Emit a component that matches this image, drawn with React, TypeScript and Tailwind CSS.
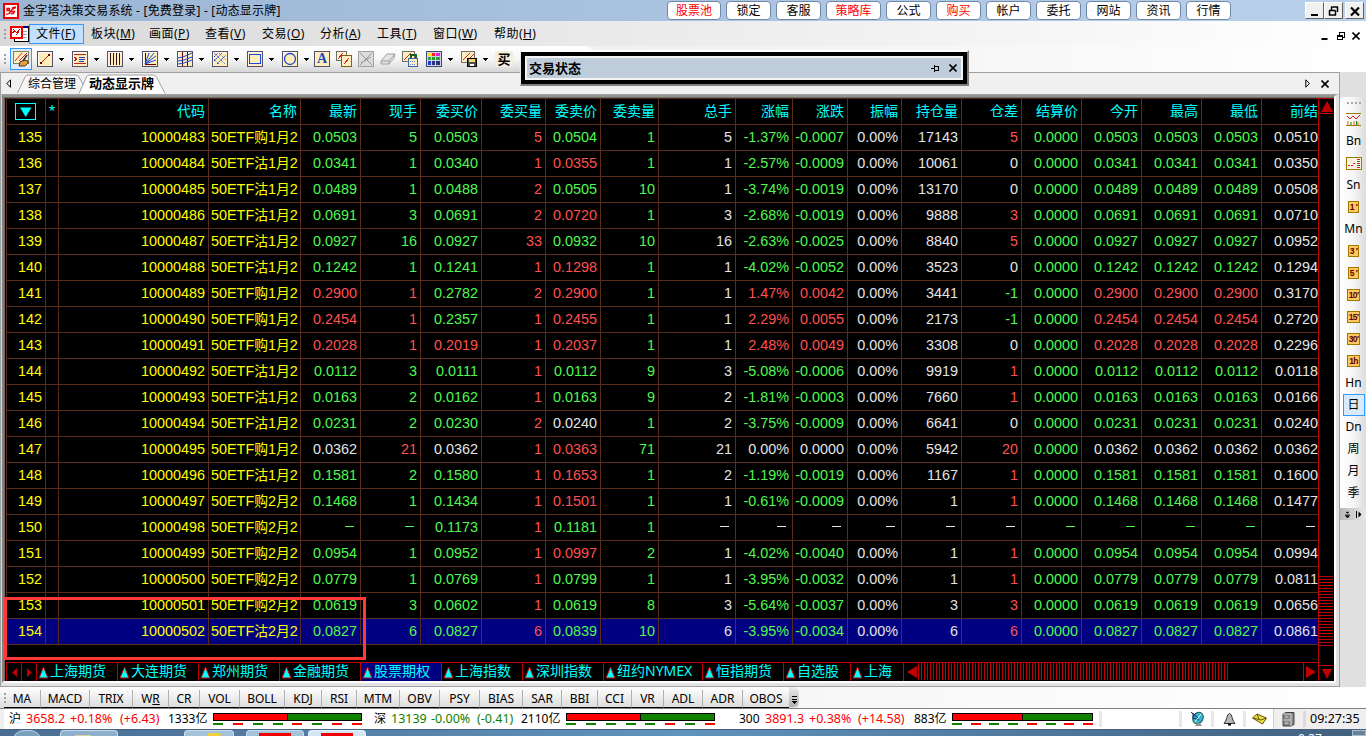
import type { ReactNode } from 'react'
import clsx from 'clsx'

/* ================= Data ================= */

const COLORS: Record<string, string> = {
  g: 'text-[#50f850]',
  r: 'text-[#ff5050]',
  w: 'text-[#e4e4e4]',
}

const COLUMNS = [
  '代码', '名称', '最新', '现手', '委买价', '委买量', '委卖价', '委卖量', '总手', '涨幅',
  '涨跌', '振幅', '持仓量', '仓差', '结算价', '今开', '最高', '最低', '前结',
]

const GRID =
  'grid grid-cols-[39px_13px_150px_92px_60px_60px_61px_64px_55px_58px_77px_57px_55px_54px_60px_60px_60px_60px_60px_60px_57px]'

// kind+month | last | vol | bid | bid vol | ask | ask vol | total | pct | change | oi | oi diff | prev settle
const QUOTES = [
  '购1|g0.0503|g5|g0.0503|r5|g0.0504|g1|5|g-1.37%|g-0.0007|17143|r5|0.0510',
  '沽1|g0.0341|g1|g0.0340|r1|r0.0355|g1|1|g-2.57%|g-0.0009|10061|w0|0.0350',
  '沽1|g0.0489|g1|g0.0488|r2|g0.0505|g10|1|g-3.74%|g-0.0019|13170|w0|0.0508',
  '沽1|g0.0691|g3|g0.0691|r2|r0.0720|g1|3|g-2.68%|g-0.0019|9888|r3|0.0710',
  '沽1|g0.0927|g16|g0.0927|r33|g0.0932|g10|16|g-2.63%|g-0.0025|8840|r5|0.0952',
  '沽1|g0.1242|g1|g0.1241|r1|r0.1298|g1|1|g-4.02%|g-0.0052|3523|w0|0.1294',
  '购1|r0.2900|r1|g0.2782|r2|r0.2900|g1|1|r1.47%|r0.0042|3441|g-1|0.3170',
  '购1|r0.2454|r1|g0.2357|r1|r0.2455|g1|1|r2.29%|r0.0055|2173|g-1|0.2720',
  '购1|r0.2028|r1|r0.2019|r1|r0.2037|g1|1|r2.48%|r0.0049|3308|w0|0.2296',
  '沽1|g0.0112|g3|g0.0111|r1|g0.0112|g9|3|g-5.08%|g-0.0006|9919|r1|0.0118',
  '沽1|g0.0163|g2|g0.0162|r1|g0.0163|g9|2|g-1.81%|g-0.0003|7660|r1|0.0166',
  '沽1|g0.0231|g2|g0.0230|r2|w0.0240|g1|2|g-3.75%|g-0.0009|6641|w0|0.0240',
  '购1|w0.0362|r21|w0.0362|r1|r0.0363|g71|21|w0.00%|w0.0000|5942|r20|0.0362',
  '沽1|g0.1581|g2|g0.1580|r1|r0.1653|g1|2|g-1.19%|g-0.0019|1167|r1|0.1600',
  '购2|g0.1468|g1|g0.1434|r1|r0.1501|g1|1|g-0.61%|g-0.0009|1|r1|0.1477',
  '购2|g–|g–|g0.1173|r1|g0.1181|g1|–|w–|w–|–|w–|–',
  '购2|g0.0954|g1|g0.0952|r1|r0.0997|g2|1|g-4.02%|g-0.0040|1|r1|0.0994',
  '购2|g0.0779|g1|g0.0769|r1|g0.0799|g1|1|g-3.95%|g-0.0032|1|r1|0.0811',
  '购2|g0.0619|g3|g0.0602|r1|g0.0619|g8|3|g-5.64%|g-0.0037|3|r3|0.0656',
  '沽2|g0.0827|g6|g0.0827|r6|g0.0839|g10|6|g-3.95%|g-0.0034|6|r6|0.0861',
]

function toCells(line: string) {
  const [, last, vol, bid, bidVol, ask, askVol, total, pct, chg, oi, oiDiff, prev] = line.split('|')
  const none = total === '–'
  return [
    last, vol, bid, bidVol, ask, askVol, 'w' + total, pct, chg,
    none ? 'w–' : 'w0.00%', 'w' + oi, oiDiff,
    none ? 'g–' : 'g0.0000', last, last, last, 'w' + prev,
  ]
}

const TITLE_BUTTONS = [
  { t: '股票池', c: 'w-[54px] text-[#ff0000]' },
  { t: '锁定', c: 'ml-[5px] w-[45px]' },
  { t: '客服', c: 'ml-[5px] w-[45px]' },
  { t: '策略库', c: 'ml-[5px] w-[55px] text-[#ff0000]' },
  { t: '公式', c: 'ml-[5px] w-[45px]' },
  { t: '购买', c: 'ml-[5px] w-[45px] text-[#ff0000]' },
  { t: '帐户', c: 'ml-[5px] w-[45px]' },
  { t: '委托', c: 'ml-[5px] w-[45px]' },
  { t: '网站', c: 'ml-[5px] w-[45px]' },
  { t: '资讯', c: 'ml-[5px] w-[45px]' },
  { t: '行情', c: 'ml-[5px] w-[45px]' },
]

const MENUS = [
  { t: '板块', k: 'M', w: 'w-[58px]' },
  { t: '画面', k: 'P', w: 'w-[56px]' },
  { t: '查看', k: 'V', w: 'w-[57px]' },
  { t: '交易', k: 'O', w: 'w-[58px]' },
  { t: '分析', k: 'A', w: 'w-[57px]' },
  { t: '工具', k: 'T', w: 'w-[56px]' },
  { t: '窗口', k: 'W', w: 'w-[61px]' },
  { t: '帮助', k: 'H', w: 'w-[58px]' },
]

const MARKET_TABS = [
  { t: '上海期货', w: 'w-[81px]' },
  { t: '大连期货', w: 'w-[81px]' },
  { t: '郑州期货', w: 'w-[81px]' },
  { t: '金融期货', w: 'w-[81px]' },
  { t: '股票期权', w: 'w-[81px]', on: true },
  { t: '上海指数', w: 'w-[81px]' },
  { t: '深圳指数', w: 'w-[81px]' },
  { t: '纽约NYMEX', w: 'w-[99px]' },
  { t: '恒指期货', w: 'w-[81px]' },
  { t: '自选股', w: 'w-[67px]' },
  { t: '上海', w: 'w-[53px]' },
]

const INDICATORS = [
  { t: 'MA', w: 'w-[36px]' },
  { t: 'MACD', w: 'w-[49px]' },
  { t: 'TRIX', w: 'w-[43px]' },
  { t: 'WR', w: 'w-[36px]' },
  { t: 'CR', w: 'w-[31px]' },
  { t: 'VOL', w: 'w-[40px]' },
  { t: 'BOLL', w: 'w-[45px]' },
  { t: 'KDJ', w: 'w-[37px]' },
  { t: 'RSI', w: 'w-[35px]' },
  { t: 'MTM', w: 'w-[43px]' },
  { t: 'OBV', w: 'w-[40px]' },
  { t: 'PSY', w: 'w-[40px]' },
  { t: 'BIAS', w: 'w-[43px]' },
  { t: 'SAR', w: 'w-[39px]' },
  { t: 'BBI', w: 'w-[36px]' },
  { t: 'CCI', w: 'w-[34px]' },
  { t: 'VR', w: 'w-[32px]' },
  { t: 'ADL', w: 'w-[39px]' },
  { t: 'ADR', w: 'w-[40px]' },
  { t: 'OBOS', w: 'w-[47px]' },
]

/* ================= Small pieces ================= */

function Logo({ className }: { className: string }) {
  return (
    <svg viewBox="0 0 16 16" className={className}>
      <rect width="16" height="16" fill="#f00000" />
      <rect x="2" y="2" width="12" height="12" fill="#fff" />
      <path d="M4 5.500h2.500v2H4zM3 11.500l3-1 3-4 4-2M8.500 8.500h3l-1 2h-3M9 5l4-1" stroke="#e00000" strokeWidth="1.300" fill="none" />
    </svg>
  )
}

function Tile({ children }: { children: ReactNode }) {
  return (
    <svg viewBox="0 0 16 16" shapeRendering="crispEdges" className="h-4 w-4 shrink-0">
      <rect x="0.5" y="0.5" width="15" height="15" fill="#ffeebc" stroke="#50506c" />
      <path d="M1.5 14.5v-13h13" stroke="#fffbe8" fill="none" />
      {children}
    </svg>
  )
}

function Caret() {
  return (
    <svg viewBox="0 0 5 3" className="ml-[6px] mr-2 h-[3px] w-[5px] shrink-0" shapeRendering="crispEdges">
      <path d="M0 0h5L2.5 3z" fill="#000" />
    </svg>
  )
}

function Cross({ className }: { className: string }) {
  return (
    <svg viewBox="0 0 8 8" className={className}>
      <path d="M0.5 0.5l7 7M7.5 0.5l-7 7" stroke="#000" strokeWidth="1.6" />
    </svg>
  )
}

function Grip({ className }: { className?: string }) {
  return (
    <div className={clsx('flex flex-col gap-[2px]', className)}>
      {[0, 1, 2].map(i => (
        <i key={i} className="h-[2px] w-[2px] bg-[#a0a0a0]" />
      ))}
    </div>
  )
}

/* ================= Title + menu ================= */

function TitleBar() {
  return (
    <header className="flex h-[21px] shrink-0 items-center bg-linear-to-r from-[#9bb5d5] to-[#b9d1ea]">
      <Logo className="ml-[3px] h-4 w-4 shrink-0" />
      <span className="ml-1 w-[644px] whitespace-pre text-[12px] leading-[20px] tracking-[0.2px]">
        金字塔决策交易系统 - [免费登录] - [动态显示牌]
      </span>
      {TITLE_BUTTONS.map(b => (
        <button
          key={b.t}
          className={clsx('h-[19px] shrink-0 rounded-[4px] border border-[#7088a8] bg-white text-center text-[12px] leading-[17px]', b.c)}
        >
          {b.t}
        </button>
      ))}
      <div className="ml-auto mr-[2px] flex">
        <WinButton>
          <path d="M5 12h7" strokeWidth="2" />
        </WinButton>
        <WinButton>
          <path d="M6 4h7M6.5 4v3M12.5 4v5M4 7.5h6.5M4.5 7.5v5M10.5 7.5v5M4 12h7" strokeWidth="1.5" />
        </WinButton>
        <WinButton className="ml-[2px]">
          <path d="M5 4.5l8 8M13 4.5l-8 8" strokeWidth="2.2" />
        </WinButton>
      </div>
    </header>
  )
}

function WinButton({ children, className }: { children: ReactNode; className?: string }) {
  return (
    <span className={clsx('h-[17px] w-[19px] border border-b-[#606060] border-l-white border-r-[#606060] border-t-white bg-[#f0f0f0]', className)}>
      <svg viewBox="0 0 17 15" className="h-[15px] w-[17px]" fill="none" stroke="#000">
        {children}
      </svg>
    </span>
  )
}

function MenuBar() {
  return (
    <nav className="flex h-[25px] shrink-0 items-center bg-linear-to-r from-[#d9d9d9] via-[#ececec] to-[#ffffff] text-[12px]">
      <Grip className="ml-1" />
      <div className="ml-[4px] flex h-5 w-[19px] items-center">
        <svg viewBox="0 0 19 17" className="h-[17px] w-[19px]" shapeRendering="crispEdges">
          <rect x="4.5" y="1" width="14" height="15" fill="#fff" stroke="#000" />
          <rect x="5" y="1" width="13" height="2" fill="#000080" />
          <path d="M13 6h4M13 9h4M13 12h4" stroke="#a0a0a0" />
          <rect x="0.5" y="1.5" width="11" height="11" fill="#fff" stroke="#f00000" strokeWidth="2" />
          <path d="M2 8l3-2 2 2 3-4M3 4l2 2M6 10l3-3" stroke="#e00000" fill="none" />
        </svg>
      </div>
      <span className="flex h-5 w-[55px] items-center whitespace-nowrap border border-[#3399ff] bg-[#c2e0ff] pl-[6px] tracking-[0.45px]">
        文件(<u>F</u>)
      </span>
      <span className="w-[7px]" />
      {MENUS.map(m => (
        <span key={m.k} className={clsx('shrink-0 whitespace-nowrap tracking-[0.45px]', m.w)}>
          {m.t}(<u>{m.k}</u>)
        </span>
      ))}
      <div className="ml-auto mr-[6px] mt-[5px] flex items-center">
        <svg viewBox="0 0 7 10" className="h-[10px] w-[7px]">
          <path d="M0.5 8h6" stroke="#000" strokeWidth="2" />
        </svg>
        <svg viewBox="0 0 8 10" className="ml-[9px] h-[10px] w-2" shapeRendering="crispEdges" fill="none" stroke="#000">
          <path d="M2.5 4V1.5h5v5H6M2 1.5h6" />
          <path d="M0.5 4.5h5v4h-5zM0 4.5h6M0 5h6" />
        </svg>
        <Cross className="ml-[7px] h-2 w-2" />
      </div>
    </nav>
  )
}

/* ================= Drawing toolbar ================= */

function Toolbar() {
  return (
    <div className="flex h-[26px] shrink-0 bg-linear-to-r from-[#e4e4e4] to-[#ffffff]">
      <div className="flex w-[592px] items-center rounded-r-md bg-linear-to-b from-[#ffffff] via-[#f6f6f6] to-[#d6d6d6]">
        <Grip className="ml-1" />
        <span className="ml-[4px] mr-[5px] flex h-[22px] w-[22px] shrink-0 items-center justify-center border border-[#3399ff] bg-[#dcecfb]">
          <svg viewBox="0 0 16 16" className="h-4 w-4">
            <rect x="0.5" y="0.5" width="15" height="12" fill="#fff0c4" stroke="#808060" />
            <path d="M2 10L9 2M6 10l8-8" stroke="#e02020" />
            <path d="M6 15l1-4 4-2 4 1v2l-3 3z" fill="#e0a050" stroke="#603010" />
            <path d="M10 10l4-6" stroke="#203060" strokeWidth="1.5" />
          </svg>
        </span>
        <Tile>
          <path d="M4 12l8-8" stroke="#c02020" />
          <path d="M3 11h2v2H3zM11 3h2v2h-2z" fill="#600" />
        </Tile>
        <Caret />
        <Tile>
          <path d="M2 3.5h12M2 12.5h12" stroke="#c02020" />
          <path d="M7 6.5h6M7 8.5h6M7 10.5h5" stroke="#2040c0" />
          <path d="M2 6l3 2-3 2" stroke="#c02020" fill="none" />
        </Tile>
        <Caret />
        <Tile>
          <path d="M3.5 2v12M6.5 2v12M9.5 2v12M12.5 2v12" stroke="#301010" />
        </Tile>
        <Caret />
        <Tile>
          <path d="M3 13V2M3 13h11" stroke="#600" />
          <path d="M3 13L7 2M3 13L12 2M3 13l11-8M3 13l11-4" stroke="#1848e0" shapeRendering="auto" />
        </Tile>
        <Caret />
        <Tile>
          <path d="M5.5 1v14M10.5 1v14" stroke="#600" />
          <path d="M1 7l5-1 9-4M1 10l6-1 8-3M1 13l6-1 8-3" stroke="#1848e0" fill="none" shapeRendering="auto" />
        </Tile>
        <Caret />
        <Tile>
          <path d="M2 6l4-4M2 10l8-8M5 13l9-9" stroke="#1848e0" strokeDasharray="2 1" shapeRendering="auto" />
          <path d="M2 2l11 11M7 2l7 7M2 8l5 5" stroke="#1848e0" strokeDasharray="1 1" shapeRendering="auto" />
        </Tile>
        <Caret />
        <Tile>
          <rect x="2.5" y="3.5" width="11" height="9" fill="none" stroke="#1848e0" />
        </Tile>
        <Caret />
        <Tile>
          <circle cx="8" cy="8" r="5.5" fill="none" stroke="#1848e0" strokeWidth="1.3" shapeRendering="auto" />
        </Tile>
        <Caret />
        <span className="-ml-[3px] mr-[6px] flex h-4 w-4 shrink-0 items-center justify-center border border-[#50506c] bg-[#ffeebc] font-['Liberation_Serif',serif] text-[14px] font-bold leading-none text-[#1848c0]">
          A
        </span>
        <svg viewBox="0 0 16 16" className="mr-[6px] h-4 w-4 shrink-0" shapeRendering="crispEdges">
          <rect x="0.5" y="0.5" width="10" height="9" fill="#fff4d4" stroke="#707060" />
          <rect x="5.5" y="4.5" width="10" height="11" fill="#fff0c4" stroke="#806010" />
          <path d="M2 8l5-6M8 13l5-6" stroke="#e02020" />
        </svg>
        <svg viewBox="0 0 16 16" className="mr-[6px] h-4 w-4 shrink-0">
          <rect x="0.5" y="0.5" width="15" height="15" fill="#dcdcdc" stroke="#a0a0a0" />
          <path d="M2 2l12 12M14 2L2 14M3 12L13 6" stroke="#989898" />
        </svg>
        <svg viewBox="0 0 16 16" className="mr-[6px] h-4 w-4 shrink-0">
          <path d="M1 10l6-7h8l-1 4-5 6H1z" fill="#e4e4e4" stroke="#a0a0a0" />
          <path d="M1 10h8l6-7M9 10v3" stroke="#a0a0a0" fill="none" />
        </svg>
        <svg viewBox="0 0 16 16" className="mr-[8px] h-4 w-4 shrink-0" shapeRendering="crispEdges">
          <rect x="0.5" y="0.5" width="12" height="10" fill="#fff0c4" stroke="#707060" />
          <path d="M2 9l7-7" stroke="#e02020" />
          <path d="M8.500 8V3.500h5V8" stroke="#106020" strokeWidth="2" fill="none" />
          <rect x="6.500" y="7.500" width="9" height="8" fill="#fff4c0" stroke="#4060a0" />
          <path d="M8 10h6M8 13h6" stroke="#6080e0" strokeDasharray="1 1" />
        </svg>
        <svg viewBox="0 0 16 16" className="h-4 w-4 shrink-0" shapeRendering="crispEdges">
          <rect x="0.5" y="0.5" width="15" height="15" fill="#d0d4e8" stroke="#404878" />
          <path d="M2 2h3v3H2z" fill="#ffe020" />
          <path d="M6 2h3v3H6z" fill="#ff2020" />
          <path d="M10 2h4v3h-4z" fill="#e020e0" />
          <path d="M2 6h3v3H2zM10 6h4v3h-4z" fill="#30a040" />
          <path d="M6 6h3v3H6z" fill="#20a020" />
          <path d="M2 10h3v4H2z" fill="#2040d0" />
          <path d="M6 10h3v4H6zM10 10h4v4h-4z" fill="#303080" />
        </svg>
        <Caret />
        <svg viewBox="0 0 16 16" className="h-4 w-4 shrink-0" shapeRendering="crispEdges">
          <rect x="0.5" y="0.5" width="13" height="11" fill="#fff0c4" stroke="#707060" />
          <path d="M2 9l7-7M6 10l7-7" stroke="#e02020" />
          <rect x="6.500" y="7.500" width="9" height="8" fill="#505050" stroke="#000" />
          <path d="M8 8h6v3H8z" fill="#ffd860" />
          <path d="M9 13h4v2H9z" fill="#fff" />
        </svg>
        <Caret />
        <span className="-ml-px flex h-4 w-[18px] items-center justify-center bg-[#f3eee0] text-[13px] font-bold leading-none">买</span>
      </div>
    </div>
  )
}

/* ================= Document tabs ================= */

function DocTabs() {
  return (
    <div className="flex h-[21px] shrink-0 items-center bg-[#f0f0f0] text-[12px]">
      <svg viewBox="0 0 5 9" className="ml-[5px] h-[9px] w-[5px]">
        <path d="M4.500 0.800v7.400L0.800 4.500z" fill="none" stroke="#000" />
      </svg>
      <div className="relative ml-[6px] h-[21px] w-[150px]">
        <svg viewBox="0 0 150 21" className="absolute inset-0 h-[21px] w-[150px]">
          <path d="M0.500 20L8 4q1-2 3-2h48q2 0 3 2l5 9" fill="#f6f6f6" stroke="#a0a0a0" />
          <path d="M62 20.500L69.500 4q1-2 3-2h64q2 0 3 2L148 20.500" fill="#fff" stroke="#a0a0a0" />
        </svg>
        <div className="relative flex h-full items-center leading-none">
          <span className="w-[61px] whitespace-nowrap pl-[11px]">综合管理</span>
          <span className="whitespace-nowrap pl-[11px] text-[13px] font-bold">动态显示牌</span>
        </div>
      </div>
      <svg viewBox="0 0 5 9" className="ml-auto h-[9px] w-[5px]">
        <path d="M0.800 0.800v7.400L4.500 4.500z" fill="none" stroke="#000" />
      </svg>
      <Cross className="ml-[11px] mr-[10px] h-2 w-2" />
    </div>
  )
}

/* ================= Quote board ================= */

function QuoteHeader() {
  return (
    <div className={clsx(GRID, 'h-[26px] border-t border-[#5c2c1a] text-[14px] leading-[23px] text-[#00ffff]')}>
      <div className="flex items-start border-l border-[#5c2c1a] pl-[8px] pt-[4px]">
        <svg viewBox="0 0 21 17" className="h-[17px] w-[21px]">
          <rect x="0.500" y="0.500" width="20" height="16" fill="none" stroke="#00ffff" />
          <path d="M5 4.500h11.500L10.700 14z" fill="#00ffff" />
        </svg>
      </div>
      <div className="border-l border-[#5c2c1a] text-center text-[12px] leading-[23px]">*</div>
      {COLUMNS.map((c, i) => (
        <div
          key={c}
          className={clsx(
            'overflow-hidden whitespace-nowrap border-l border-[#5c2c1a] text-right',
            i === COLUMNS.length - 1 ? 'pr-0' : 'pr-[3px]',
          )}
        >
          {c}
        </div>
      ))}
    </div>
  )
}

function QuoteRow({ line, index }: { line: string; index: number }) {
  const kind = line.split('|')[0]
  const active = index === QUOTES.length - 1
  const cells = toCells(line)
  return (
    <div
      className={clsx(
        GRID,
        "h-[26px] border-t border-[#5c2c1a] font-['Liberation_Sans','Noto_Sans_CJK_SC',sans-serif] text-[14.4px] leading-[25px]",
        active && 'bg-[#000080]',
      )}
    >
      <div className="border-l border-[#5c2c1a] pr-[3px] text-right text-[#ffff00]">{135 + index}</div>
      <div className="border-l border-[#5c2c1a]" />
      <div className="border-l border-[#5c2c1a] pr-[3px] text-right text-[#ffff00]">{10000483 + index}</div>
      <div className="overflow-hidden whitespace-nowrap border-l border-[#5c2c1a] pl-[2px] text-[#ffff00]">
        50ETF<span className="text-[13.8px]">{kind[0]}</span>{kind[1]}<span className="text-[13.8px]">月</span>2
      </div>
      {cells.map((c, i) => (
        <div
          key={i}
          className={clsx(
            'whitespace-nowrap border-l border-[#5c2c1a] text-right',
            i === cells.length - 1 ? 'pr-0' : 'pr-[3px]',
            COLORS[c[0]],
          )}
        >
          {c.slice(1) === '–' ? <i className="mb-[5px] mr-[3px] inline-block h-px w-[9px] bg-current" /> : c.slice(1)}
        </div>
      ))}
    </div>
  )
}

function MarketTabs() {
  return (
    <div className="flex h-[19px] shrink-0 border-t border-[#c00000] text-[14px] leading-[16px] text-[#00ffff]">
      <div className="flex w-[15px] items-center justify-center border-l border-[#c00000]">
        <svg viewBox="0 0 5 9" className="h-[9px] w-[5px]"><path d="M5 0v9L0 4.500z" fill="#c00000" /></svg>
      </div>
      <div className="flex w-[15px] items-center justify-center border-l border-[#c00000]">
        <svg viewBox="0 0 5 9" className="h-[9px] w-[5px]"><path d="M0 0v9L5 4.500z" fill="#c00000" /></svg>
      </div>
      {MARKET_TABS.map(m => (
        <div
          key={m.t}
          className={clsx('flex shrink-0 items-start whitespace-nowrap border-l border-[#c00000] pl-px', m.w, m.on && 'bg-[#000080]')}
        >
          <svg viewBox="0 0 11 13" className="mr-px mt-[3px] h-[13px] w-[11px] shrink-0">
            <path d="M5.500 1L10 12H1z" fill="#00ffff" stroke="#c00000" />
          </svg>
          {m.t}
        </div>
      ))}
      <div className="flex w-[14px] shrink-0 items-center justify-end border-l border-[#c00000]">
        <svg viewBox="0 0 10 12" className="h-3 w-[10px]"><path d="M10 0v12L0 6z" fill="#c00000" /></svg>
      </div>
      <div className="ml-px h-[17px] w-[310px] shrink-0 bg-[repeating-linear-gradient(90deg,#c00000_0_1px,#000_1px_3px)]" />
      <div className="ml-auto flex w-[15px] shrink-0 items-center border-l border-[#c00000] pl-[2px]">
        <svg viewBox="0 0 10 12" className="h-3 w-[10px]"><path d="M0 0v12L10 6z" fill="#c00000" /></svg>
      </div>
    </div>
  )
}

function VScroll() {
  return (
    <div className="flex flex-1 flex-col border-l border-t border-[#c00000]">
      <div className="flex h-[15px] items-center justify-center border-b border-[#c00000]">
        <svg viewBox="0 0 12 11" className="h-[11px] w-3"><path d="M6 0l6 11H0z" fill="#c00000" /></svg>
      </div>
      <div className="mt-[462px] h-[70px] w-[14px] bg-[repeating-linear-gradient(180deg,#c00000_0_1px,#000_1px_3px)]" />
      <div className="mt-auto flex h-4 items-center justify-center border-t border-[#c00000]">
        <svg viewBox="0 0 10 10" className="h-[10px] w-[10px]"><path d="M0 0h10L5 10z" fill="#c00000" /></svg>
      </div>
    </div>
  )
}

function Board() {
  return (
    <div className="flex w-[1340px] shrink-0 flex-col border border-[#a0a0a0] bg-[#f0f0f0]">
      <DocTabs />
      <div className="flex flex-1 border-b-3 border-l border-r-3 border-t border-b-[#e3e3e3] border-l-[#d8d8d8] border-r-[#e3e3e3] border-t-[#a0a0a0]">
        <div className="flex flex-1 border-2 border-b-white border-l-[#808080] border-r-white border-t-[#909890]">
          <div className="flex flex-1 border-l border-t border-[#696969] bg-black">
            <div className="flex w-[1313px] shrink-0 flex-col pl-px">
              <QuoteHeader />
              {QUOTES.map((q, i) => (
                <QuoteRow key={i} line={q} index={i} />
              ))}
              <div className="h-[18px] border-t border-[#5c2c1a]" />
              <MarketTabs />
            </div>
            <VScroll />
          </div>
        </div>
      </div>
    </div>
  )
}

/* ================= Period toolbar ================= */

function Period({ children }: { children: ReactNode }) {
  return (
    <span className="flex h-3 items-center whitespace-nowrap border border-[#a07800] bg-[#ffc860] px-px font-['Liberation_Sans',sans-serif] text-[8.5px] font-bold leading-none tracking-[-0.6px] text-[#600000]">
      {children}
    </span>
  )
}

function PeriodBar() {
  const items: ReactNode[] = [
    <svg viewBox="0 0 15 13" className="h-[13px] w-[15px]">
      <path d="M0 0.500h15M0 12.500h15" stroke="#a07800" />
      <path d="M1 3l3 3 3-3 3 3 4-4" stroke="#e02020" fill="none" />
      <path d="M2 12V8M8 12V8M12 12V9" stroke="#e07000" />
      <path d="M5 12V9M10.500 12V8" stroke="#108020" />
    </svg>,
    'Bn',
    <svg viewBox="0 0 16 13" className="h-[13px] w-4" shapeRendering="crispEdges">
      <rect x="0.500" y="0.500" width="15" height="12" fill="#fff4e4" stroke="#a07800" />
      <path d="M2 8.500h5M7 6.500h3" stroke="#e02020" strokeDasharray="2 1" />
      <path d="M11 2.500h3M11 6.500h3M11 10.500h3" stroke="#e02020" />
      <path d="M11 4.500h3M11 8.500h3" stroke="#108020" />
    </svg>,
    'Sn', <Period>1 ′</Period>, 'Mn', <Period>3 ′</Period>, <Period>5 ′</Period>, <Period>10′</Period>,
    <Period>15′</Period>, <Period>30′</Period>, <Period>1h</Period>, 'Hn', '日', 'Dn', '周', '月', '季',
  ]
  return (
    <aside className="flex flex-1 flex-col bg-[#e0e0e0] pt-[25px]">
      <div className="flex flex-col items-center rounded-t bg-linear-to-r from-[#ffffff] via-[#f6f6f6] to-[#dcdcdc] pl-px">
        <div className="flex h-[11px] w-full items-center justify-center gap-[2px]">
          {[0, 1, 2, 3].map(i => (
            <i key={i} className="h-[2px] w-[2px] bg-[#a8a8a8]" />
          ))}
        </div>
        {items.map((it, i) => (
          <div
            key={i}
            className={clsx(
              'flex h-[22px] w-[22px] items-center justify-center text-[12px] leading-none',
              it === '日' && 'border border-[#3399ff] bg-[#d8ebfd]',
            )}
          >
            {it}
          </div>
        ))}
        <div className="h-[4px]" />
      </div>
      <div className="flex h-[12px] items-center justify-center gap-[6px] bg-linear-to-r from-[#b8b8b8] to-[#e8e8e8]">
        <svg viewBox="0 0 5 7" className="h-[7px] w-[5px]"><path d="M0 3.500h5M0 4.500h5L2.500 7zM1 1l1.500 1.500L4 1z" stroke="#000" strokeWidth="0.400" /></svg>
        <svg viewBox="0 0 6 7" className="h-[7px] w-[6px]"><path d="M0.500 0v7" stroke="#000" /><path d="M2.500 0.500v6l3-3z" /></svg>
      </div>
    </aside>
  )
}

/* ================= Bottom bars ================= */

function IndicatorBar() {
  return (
    <div className="flex h-[21px] shrink-0 bg-linear-to-r from-[#ececec] to-[#ffffff] text-[12px]">
      <div className="flex rounded-r bg-linear-to-b from-[#ffffff] to-[#dcdcdc]">
        <Grip className="ml-1 mt-[6px]" />
        {INDICATORS.map((it, i) => (
          <div
            key={it.t}
            className={clsx(
              'mt-[3px] flex h-[18px] shrink-0 items-center justify-center border-b border-black leading-none',
              i === 0 ? 'ml-[-2px]' : 'border-l border-l-[#b0b0b0]',
              it.w,
            )}
          >
            {it.t === 'WR' ? <span>W<u>R</u></span> : it.t}
          </div>
        ))}
        <div className="flex h-[20px] w-[10px] items-end justify-center rounded-r-md bg-linear-to-b from-[#ececec] to-[#b0b0b0] pb-[3px]">
          <svg viewBox="0 0 5 8" className="h-2 w-[5px]" shapeRendering="crispEdges">
            <path d="M0 0.500h5M0 3.500h5" stroke="#000" />
            <path d="M0 5h5L2.500 8z" />
          </svg>
        </div>
      </div>
    </div>
  )
}

// two-tone bar with the up/down ticks under it
function Meter({ ticks, className }: { ticks: string; className: string }) {
  return (
    <div className={clsx('shrink-0', className)}>
      <div className="flex h-2 border border-black">
        <div className="flex-1 border-r border-black bg-[#ff0000]" />
        <div className="flex-1 bg-[#108000]" />
      </div>
      <div className="mt-[2px] flex justify-between">
        {ticks.split('').map((t, i) => (
          <i key={i} className={clsx('h-[2px] w-[10px]', t === 'r' ? 'bg-[#ff0000]' : 'bg-[#108000]')} />
        ))}
      </div>
    </div>
  )
}

function StatusBar() {
  return (
    <footer className="flex h-[21px] shrink-0 items-center whitespace-nowrap border-t border-[#808080] bg-white text-[12.5px] leading-none">
      <span className="h-full w-1 bg-[#f0eeee]" />
      <span className="ml-[5px] w-[17px] text-[12px]">沪</span>
      <span className="w-[44px] text-[#ff0000]">3658.2</span>
      <span className="w-[50px] text-[#ff0000]">+0.18%</span>
      <span className="w-[48px] text-[#ff0000]">(+6.43)</span>
      <span className="w-[45px] text-[12px]">1333亿</span>
      <Meter ticks="grggrgrr" className="w-[149px]" />
      <span className="ml-[12px] w-[17px] text-[12px]">深</span>
      <span className="w-[40px] text-[#108000]">13139</span>
      <span className="w-[46px] text-[#108000]">-0.00%</span>
      <span className="w-[44px] text-[#108000]">(-0.41)</span>
      <span className="w-[45px] text-[12px]">2110亿</span>
      <Meter ticks="gggggrgr" className="w-[149px]" />
      <span className="ml-6 w-[26px] text-[12px]">300</span>
      <span className="w-[44px] text-[#ff0000]">3891.3</span>
      <span className="w-[49px] text-[#ff0000]">+0.38%</span>
      <span className="w-[56px] text-[#ff0000]">(+14.58)</span>
      <span className="w-[38px] text-[12px]">883亿</span>
      <Meter ticks="grggrgrr" className="w-[141px]" />
      <span className="ml-[6px] h-4 w-[3px] bg-[#e8e6e6]" />
      <div className="ml-auto flex h-full items-center">
        <span className="h-4 w-[3px] bg-[#e8e6e6]" />
        <svg viewBox="0 0 15 16" className="ml-[8px] h-4 w-[15px]">
          <ellipse cx="8" cy="7" rx="5" ry="6" transform="rotate(35 8 7)" fill="#30b8c8" stroke="#305060" />
          <path d="M1 1l7 6M3 2v5l6 2" stroke="#102060" fill="none" />
          <path d="M7 12l-2 3h7l-2-3" fill="#909090" />
          <path d="M11 3l-6 8" stroke="#e0ffff" />
        </svg>
        <span className="ml-[6px] h-4 w-[3px] bg-[#e8e6e6]" />
        <svg viewBox="0 0 13 13" className="ml-[9px] h-[13px] w-[13px]">
          <path d="M6.500 0.500c-3 1-2 6-5.500 10h11c-3.500-4-2.500-9-5.500-10z" fill="#b8b8b8" stroke="#303030" />
          <path d="M5 11.500h3" stroke="#000" strokeWidth="2" />
        </svg>
        <span className="ml-[7px] h-4 w-[3px] bg-[#e8e6e6]" />
        <svg viewBox="0 0 15 12" className="ml-[6px] h-3 w-[15px]">
          <path d="M0.500 5L5 1l9.500 4-4 6z" fill="#f0e040" stroke="#605010" />
          <path d="M1 5l8 2 5-2M5 1l2 5" stroke="#605010" fill="none" />
        </svg>
        <div className="ml-[6px] flex h-full items-center border-l border-[#d0d0d0] bg-[#f0eeee]">
          <svg viewBox="0 0 13 15" className="ml-2 h-[15px] w-[13px]">
            <path d="M1 2l3-1.500h8v12L9 14H1z" fill="#888" stroke="#404040" />
            <path d="M1 2h8v12M1 8h8M3 5h3M3 11h3" stroke="#d0d0d0" fill="none" />
          </svg>
          <span className="ml-[8px] h-4 w-[3px] bg-[#dcdada]" />
          <span className="w-[60px] pl-1">09:27:35</span>
        </div>
      </div>
    </footer>
  )
}

function TaskBar() {
  return (
    <div className="flex h-[7px] shrink-0 overflow-hidden border-t border-[#486080] bg-linear-to-r from-[#4a6d93] via-[#5f93bd] to-[#41607f]">
      <div className="ml-[12px] h-6 w-[30px] shrink-0 rounded-full border border-[#b8d4e8] bg-[#7ba0bc]" />
      <div className="ml-[18px] w-[58px] shrink-0 rounded-t border border-b-0 border-[#c8dcec] bg-[#8fb0cc]">
        <div className="ml-[14px] mt-[4px] h-[2px] w-[16px] bg-[#d8d0a0]" />
      </div>
      <div className="ml-[66px] w-[50px] shrink-0 rounded-t border border-b-0 border-[#c8dcec] bg-[#a4c2da]">
        <div className="ml-[22px] mt-[2px] h-[6px] w-[14px] rounded-full bg-[#f0d040]" />
      </div>
      <div className="ml-[12px] w-[58px] shrink-0 rounded-t border border-b-0 border-[#c8dcec] bg-[#a4c2da]">
        <div className="ml-[12px] mt-[2px] h-2 w-8 border-[3px] border-[#f00000] bg-white" />
      </div>
      <div className="ml-[4px] w-[58px] shrink-0 rounded-t border border-b-0 border-[#e8f4fc] bg-[#d4e6f4]">
        <div className="ml-[12px] mt-[2px] h-2 w-8 border-[3px] border-[#f00000] bg-white" />
      </div>
      <div className="ml-auto mr-[28px] mt-[3px] h-[11px] w-[26px] whitespace-nowrap text-[12px] leading-[11px] text-white">9:27</div>
      <div className="w-[14px] shrink-0 border border-[#a8bccc] bg-[#6a8299]" />
    </div>
  )
}

/* ================= Page ================= */

export default function App() {
  return (
    <main className="relative flex h-[736px] w-[1366px] flex-col overflow-hidden bg-[#f0f0f0] font-['Noto_Sans','Noto_Sans_CJK_SC',sans-serif] text-black">
      <TitleBar />
      <MenuBar />
      <Toolbar />
      <div className="flex h-[615px] shrink-0">
        <Board />
        <PeriodBar />
      </div>
      <IndicatorBar />
      <StatusBar />
      <TaskBar />

      {/* floating trade status window */}
      <div className="absolute left-[520px] top-[50px] h-[36px] w-[449px] border-b-2 border-l border-r-2 border-t-2 border-b-[#808080] border-l-[#e8e8e8] border-r-[#808080] border-t-white">
        <div className="flex h-full border-4 border-black bg-[#f4f4f4] p-[2px]">
          <div className="flex flex-1 items-center bg-[#bfcddb] pl-[2px] text-[13px] font-bold leading-none">
            <span className="pt-px">交易状态</span>
            <svg viewBox="0 0 8 8" className="ml-auto h-2 w-2" shapeRendering="crispEdges" fill="none" stroke="#000">
              <path d="M0 4.500h3M3.500 1v7M3 2.500h4.500v4H3M3 6h5" />
            </svg>
            <Cross className="ml-[10px] mr-[4px] h-2 w-2" />
          </div>
        </div>
      </div>

      {/* marker around the last rows */}
      <div className="absolute left-[4px] top-[597px] h-[63px] w-[362px] border-[3px] border-[#ff3838]" />
    </main>
  )
}
